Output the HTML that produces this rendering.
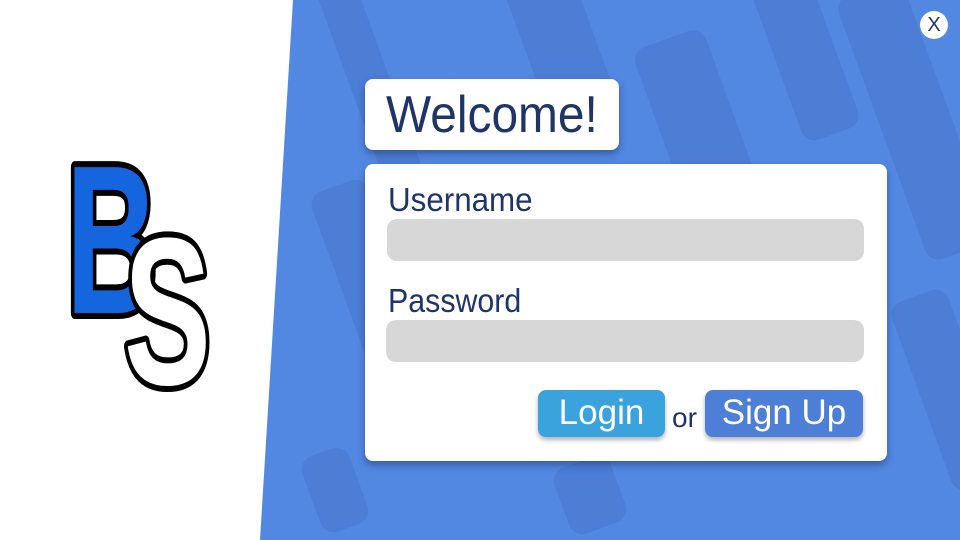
<!DOCTYPE html>
<html><head><meta charset="utf-8"><style>
*{margin:0;padding:0;box-sizing:border-box}
html,body{width:960px;height:540px;overflow:hidden}
body{background:#5388e2;font-family:"Liberation Sans",sans-serif;position:relative}
#w{position:absolute;left:0;top:0;width:960px;height:540px;overflow:hidden}
.stripe{position:absolute;background:#4b7dd2;border-radius:14px;transform:rotate(-20deg);opacity:.85}
.white{position:absolute;left:0;top:0;width:960px;height:540px}
.card{position:absolute;background:#fff;border-radius:8px;box-shadow:0 4px 8px rgba(20,40,90,.45)}
.t{color:#1f3468;position:absolute;white-space:nowrap;transform-origin:0 0}
.field{position:absolute;background:#d7d7d7;border-radius:10px}
.btn{position:absolute;border-radius:8px;color:#fff;font-size:35px;text-align:center;box-shadow:0 3px 5px rgba(0,0,0,.3);line-height:46px}
</style></head><body><div id="w">
<div class="stripe" style="left:360px;top:-40px;width:40px;height:300px"></div>
<div class="stripe" style="left:520px;top:-60px;width:70px;height:180px"></div>
<div class="stripe" style="left:680px;top:30px;width:75px;height:300px"></div>
<div class="stripe" style="left:770px;top:-60px;width:60px;height:200px"></div>
<div class="stripe" style="left:880px;top:-20px;width:70px;height:280px"></div>
<div class="stripe" style="left:340px;top:180px;width:60px;height:200px"></div>
<div class="stripe" style="left:310px;top:450px;width:50px;height:80px"></div>
<div class="stripe" style="left:920px;top:290px;width:60px;height:200px"></div>
<div class="stripe" style="left:560px;top:460px;width:60px;height:70px"></div>
<svg class="white" viewBox="0 0 960 540"><polygon points="0,0 293,0 260,540 0,540" fill="#fff"/>
<g transform="translate(66,313) scale(0.6,1)"><text x="0" y="0" font-family="Liberation Sans" font-weight="bold" font-size="212" fill="#1565de" stroke="#000" stroke-width="12" paint-order="stroke" stroke-linejoin="round">B</text></g>
<g transform="translate(124,384) scale(0.62,1)"><text x="0" y="0" font-family="Liberation Sans" font-weight="bold" font-size="210" fill="#fff" stroke="#000" stroke-width="12" paint-order="stroke" stroke-linejoin="round">S</text></g>
</svg>
<div style="position:absolute;left:920px;top:11px;width:28px;height:28px;border-radius:50%;background:#fff;color:#1f3468;font-size:20px;text-align:center;line-height:28px">X</div>
<div class="card" style="left:365px;top:79px;width:254px;height:71px"></div>
<div class="t" style="left:386px;top:85px;font-size:52px;transform:scaleX(.92)">Welcome!</div>
<div class="card" style="left:365px;top:164px;width:522px;height:297px"></div>
<div class="t" style="left:388px;top:181px;font-size:33px;transform:scaleX(.95)">Username</div>
<div class="field" style="left:387px;top:219px;width:477px;height:42px"></div>
<div class="t" style="left:388px;top:282px;font-size:33px;transform:scaleX(.92)">Password</div>
<div class="field" style="left:386px;top:320px;width:478px;height:42px"></div>
<div class="btn" style="left:538px;top:390px;width:127px;height:47px;background:#3aa2dc">Login</div>
<div class="t" style="left:672px;top:402px;font-size:28px">or</div>
<div class="btn" style="left:705px;top:390px;width:158px;height:47px;background:#4e7fd6">Sign Up</div>
</div></body></html>
